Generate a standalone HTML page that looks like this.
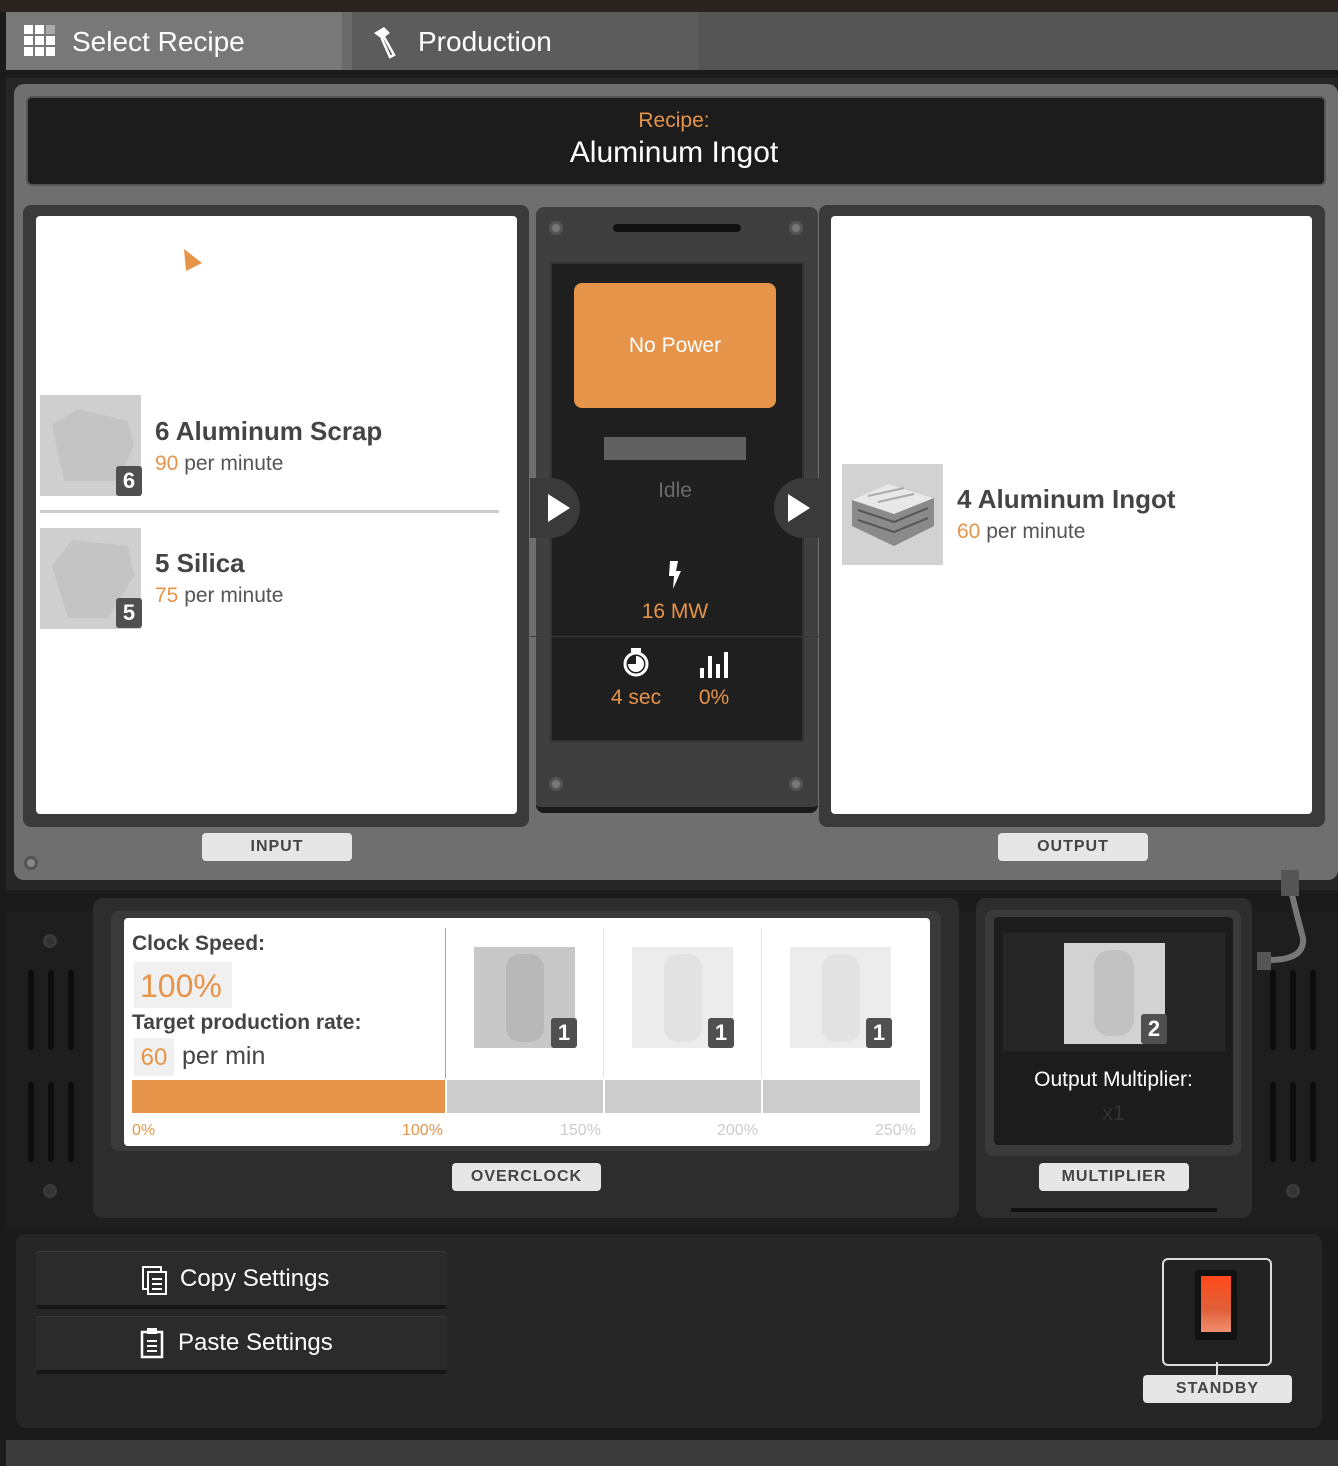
<!DOCTYPE html>
<html><head><style>
*{margin:0;padding:0;box-sizing:border-box}
body{width:1338px;height:1466px;background:#1b1b1b;position:relative;overflow:hidden;font-family:"Liberation Sans","DejaVu Sans",sans-serif}
.a{position:absolute}
.lbl{position:absolute;background:#e6e6e6;color:#444;font-weight:bold;font-size:16px;text-align:center;line-height:28px;border-radius:4px;letter-spacing:1px}
.badge{position:absolute;background:#505050;color:#fff;font-weight:bold;font-size:22px;width:26px;height:30px;line-height:30px;text-align:center;border-radius:3px}
.or{color:#e6944a}
.vent{position:absolute;width:6px;height:80px;background:#0d0d0d;border-radius:3px}
.screw{position:absolute;width:14px;height:14px;border-radius:50%;background:#777;border:3px solid #555}
</style></head><body>
<div class="a" style="left:0;top:0;width:1338px;height:12px;background:#2a2320"></div>
<div class="a" style="left:6px;top:12px;width:1332px;height:58px;background:#555"></div>
<div class="a" style="left:6px;top:12px;width:336px;height:58px;background:#787878"></div>
<div class="a" style="left:342px;top:12px;width:10px;height:58px;background:#6a6a6a"></div>
<div class="a" style="left:352px;top:12px;width:346px;height:58px;background:#5c5c5c"></div>
<svg class="a" style="left:24px;top:25px" width="32" height="32"><g fill="#fff"><rect x="0" y="0" width="9" height="9"/><rect x="11" y="0" width="9" height="9"/><rect x="22" y="0" width="9" height="9" fill="#aaa"/><rect x="0" y="11" width="9" height="9"/><rect x="11" y="11" width="9" height="9"/><rect x="22" y="11" width="9" height="9"/><rect x="0" y="22" width="9" height="9"/><rect x="11" y="22" width="9" height="9"/><rect x="22" y="22" width="9" height="9"/></g></svg>
<div class="a" style="left:72px;top:26px;color:#fff;font-size:28px">Select Recipe</div>
<svg class="a" style="left:372px;top:25px" width="30" height="34"><path d="M2 8 L12 2 L18 8 L10 14Z" fill="#fff"/><path d="M12 12 L22 30 L18 32 L10 14Z" fill="none" stroke="#fff" stroke-width="2.5"/></svg>
<div class="a" style="left:418px;top:26px;color:#fff;font-size:28px">Production</div>

<div class="a" style="left:6px;top:78px;width:1332px;height:812px;background:#262626"></div>
<div class="a" style="left:14px;top:84px;width:1324px;height:796px;background:#6f6f6f;border-radius:10px"></div>
<div class="a" style="left:26px;top:96px;width:1300px;height:90px;background:#1c1c1c;border-radius:6px;border:2px solid #555"></div>
<div class="a or" style="left:0;top:109px;width:1348px;text-align:center;font-size:21px">Recipe:</div>
<div class="a" style="left:0;top:136px;width:1348px;text-align:center;font-size:30px;color:#fff">Aluminum Ingot</div>

<div class="a" style="left:23px;top:205px;width:506px;height:622px;background:#3a3a3a;border-radius:8px"></div>
<div class="a" style="left:36px;top:216px;width:481px;height:598px;background:#fff;border-radius:4px"></div>
<svg class="a" style="left:182px;top:247px" width="22" height="26"><path d="M2 2 L20 16 L4 24Z" fill="#e6944a"/></svg>
<div class="a" style="left:40px;top:395px;width:101px;height:101px;background:#cfcfcf"></div>
<svg class="a" style="left:48px;top:405px" width="88" height="80"><path d="M4 20 L30 4 L80 16 L86 40 L70 76 L16 76 Z" fill="#c4c4c4"/></svg>
<div class="badge" style="left:116px;top:466px">6</div>
<div class="a" style="left:155px;top:416px;font-size:26px;font-weight:bold;color:#444">6 Aluminum Scrap</div>
<div class="a" style="left:155px;top:452px;font-size:21px;color:#555"><span class="or">90</span> per minute</div>
<div class="a" style="left:40px;top:510px;width:459px;height:3px;background:#ccc"></div>
<div class="a" style="left:40px;top:528px;width:101px;height:101px;background:#cfcfcf"></div>
<svg class="a" style="left:48px;top:536px" width="88" height="86"><path d="M4 30 L24 4 L80 10 L86 40 L60 82 L20 82 Z" fill="#c4c4c4"/></svg>
<div class="badge" style="left:116px;top:598px">5</div>
<div class="a" style="left:155px;top:548px;font-size:26px;font-weight:bold;color:#444">5 Silica</div>
<div class="a" style="left:155px;top:584px;font-size:21px;color:#555"><span class="or">75</span> per minute</div>
<div class="lbl" style="left:202px;top:833px;width:150px">INPUT</div>

<div class="a" style="left:536px;top:207px;width:282px;height:606px;background:#3f3f3f;border-radius:8px;border-bottom:6px solid #1a1a1a"></div>
<div class="a" style="left:613px;top:224px;width:128px;height:8px;background:#111;border-radius:4px"></div>
<div class="screw" style="left:549px;top:221px"></div><div class="screw" style="left:789px;top:221px"></div>
<div class="screw" style="left:549px;top:777px"></div><div class="screw" style="left:789px;top:777px"></div>
<div class="a" style="left:550px;top:262px;width:254px;height:480px;background:#1f1f1f;border:2px solid #333"></div>
<div class="a" style="left:574px;top:283px;width:202px;height:125px;background:#e6944a;border-radius:8px;color:#fff;font-size:21px;text-align:center;line-height:125px">No Power</div>
<div class="a" style="left:604px;top:437px;width:142px;height:23px;background:#616161"></div>
<div class="a" style="left:530px;top:479px;width:290px;text-align:center;font-size:21px;color:#6a6a6a">Idle</div>
<div class="a" style="left:530px;top:478px;width:50px;height:60px;background:#3a3a3a;border-radius:0 30px 30px 0"></div>
<svg class="a" style="left:546px;top:492px" width="26" height="32"><path d="M2 2 L24 16 L2 30Z" fill="#fff"/></svg>
<div class="a" style="left:774px;top:478px;width:46px;height:60px;background:#3a3a3a;border-radius:30px 0 0 30px"></div>
<svg class="a" style="left:786px;top:492px" width="26" height="32"><path d="M2 2 L24 16 L2 30Z" fill="#fff"/></svg>
<svg class="a" style="left:666px;top:560px" width="18" height="30"><path d="M4 1 L12 1 L10 11 L15 11 L7 29 L8 16 L3 16Z" fill="#fff"/></svg>
<div class="a or" style="left:530px;top:600px;width:290px;text-align:center;font-size:21px">16 MW</div>
<div class="a" style="left:530px;top:636px;width:290px;height:1px;background:#3a3a3a"></div>
<svg class="a" style="left:620px;top:646px" width="32" height="32"><rect x="11" y="2" width="10" height="4" fill="#fff"/><circle cx="16" cy="18" r="11" fill="none" stroke="#fff" stroke-width="3"/><path d="M16 18 L16 10 A8 8 0 1 1 8 18Z" fill="#fff"/></svg>
<svg class="a" style="left:698px;top:650px" width="34" height="28"><g fill="#fff"><rect x="2" y="18" width="4" height="10"/><rect x="10" y="6" width="4" height="22"/><rect x="18" y="14" width="4" height="14"/><rect x="26" y="2" width="4" height="26"/></g></svg>
<div class="a or" style="left:606px;top:686px;width:60px;text-align:center;font-size:21px">4 sec</div>
<div class="a or" style="left:690px;top:686px;width:48px;text-align:center;font-size:21px">0%</div>

<div class="a" style="left:819px;top:205px;width:506px;height:622px;background:#3a3a3a;border-radius:8px"></div>
<div class="a" style="left:831px;top:216px;width:481px;height:598px;background:#fff;border-radius:4px"></div>
<div class="a" style="left:842px;top:464px;width:101px;height:101px;background:#d2d2d2"></div>
<svg class="a" style="left:848px;top:476px" width="90" height="76"><path d="M4 24 L40 8 L86 22 L86 50 L46 70 L4 50Z" fill="#8a8a8a"/><path d="M4 24 L40 8 L86 22 L46 38Z" fill="#e8e8e8"/><path d="M10 34 L46 46 L80 32 M10 44 L46 56 L80 42" stroke="#555" stroke-width="2" fill="none"/><path d="M20 20 L56 12 M30 26 L66 18" stroke="#aaa" stroke-width="2"/></svg>
<div class="a" style="left:957px;top:484px;font-size:26px;font-weight:bold;color:#444">4 Aluminum Ingot</div>
<div class="a" style="left:957px;top:520px;font-size:21px;color:#555"><span class="or">60</span> per minute</div>
<div class="lbl" style="left:998px;top:833px;width:150px">OUTPUT</div>
<div class="screw" style="left:24px;top:856px;background:#888"></div>

<div class="a" style="left:6px;top:912px;width:1332px;height:318px;background:#1e1e1e"></div>
<div class="screw" style="left:43px;top:934px;background:#333;border-color:#3a3a3a"></div>
<div class="screw" style="left:43px;top:1184px;background:#333;border-color:#3a3a3a"></div>
<div class="screw" style="left:1286px;top:1184px;background:#333;border-color:#3a3a3a"></div>
<div class="vent" style="left:28px;top:970px"></div><div class="vent" style="left:48px;top:970px"></div><div class="vent" style="left:68px;top:970px"></div>
<div class="vent" style="left:28px;top:1082px"></div><div class="vent" style="left:48px;top:1082px"></div><div class="vent" style="left:68px;top:1082px"></div>
<div class="vent" style="left:1270px;top:970px"></div><div class="vent" style="left:1290px;top:970px"></div><div class="vent" style="left:1310px;top:970px"></div>
<div class="vent" style="left:1270px;top:1082px"></div><div class="vent" style="left:1290px;top:1082px"></div><div class="vent" style="left:1310px;top:1082px"></div>
<svg class="a" style="left:1255px;top:868px" width="60" height="110"><path d="M34 14 Q40 40 48 70 Q50 92 14 92" fill="none" stroke="#777" stroke-width="6"/><rect x="26" y="2" width="18" height="26" fill="#555"/><rect x="2" y="84" width="14" height="18" fill="#555"/></svg>

<div class="a" style="left:93px;top:898px;width:866px;height:320px;background:#2d2d2d;border-radius:10px"></div>
<div class="a" style="left:111px;top:911px;width:830px;height:240px;background:#3a3a3a;border-radius:8px"></div>
<div class="a" style="left:124px;top:918px;width:806px;height:228px;background:#fff;border-radius:4px"></div>
<div class="a" style="left:132px;top:932px;font-size:21px;font-weight:bold;color:#444">Clock Speed:</div>
<div class="a" style="left:134px;top:962px;width:98px;height:46px;background:#f0f0f0;color:#e6944a;font-size:32px;padding-left:6px;line-height:48px">100%</div>
<div class="a" style="left:132px;top:1011px;font-size:21px;font-weight:bold;color:#444">Target production rate:</div>
<div class="a" style="left:134px;top:1038px;width:40px;height:38px;background:#f0f0f0;color:#e6944a;font-size:24px;text-align:center;line-height:40px">60</div>
<div class="a" style="left:182px;top:1042px;font-size:25px;color:#444">per min</div>
<div class="a" style="left:445px;top:928px;width:1px;height:150px;background:#e6944a"></div>
<div class="a" style="left:603px;top:928px;width:1px;height:150px;background:#e6e6e6"></div>
<div class="a" style="left:761px;top:928px;width:1px;height:150px;background:#e6e6e6"></div>
<div class="a" style="left:474px;top:947px;width:101px;height:101px;background:#c8c8c8"></div>
<div class="a" style="left:632px;top:947px;width:101px;height:101px;background:#ececec"></div>
<div class="a" style="left:790px;top:947px;width:101px;height:101px;background:#ececec"></div>
<div class="a" style="left:506px;top:954px;width:38px;height:88px;background:#b8b8b8;border-radius:14px"></div>
<div class="a" style="left:664px;top:954px;width:38px;height:88px;background:#e2e2e2;border-radius:14px"></div>
<div class="a" style="left:822px;top:954px;width:38px;height:88px;background:#e2e2e2;border-radius:14px"></div>
<div class="badge" style="left:551px;top:1018px">1</div><div class="badge" style="left:708px;top:1018px">1</div><div class="badge" style="left:866px;top:1018px">1</div>
<div class="a" style="left:132px;top:1080px;width:313px;height:33px;background:#e6944a"></div>
<div class="a" style="left:447px;top:1080px;width:156px;height:33px;background:#ccc"></div>
<div class="a" style="left:605px;top:1080px;width:156px;height:33px;background:#ccc"></div>
<div class="a" style="left:763px;top:1080px;width:157px;height:33px;background:#ccc"></div>
<div class="a or" style="left:132px;top:1122px;font-size:16px">0%</div>
<div class="a or" style="left:402px;top:1122px;font-size:16px">100%</div>
<div class="a" style="left:560px;top:1122px;font-size:16px;color:#ccc">150%</div>
<div class="a" style="left:717px;top:1122px;font-size:16px;color:#ccc">200%</div>
<div class="a" style="left:875px;top:1122px;font-size:16px;color:#ccc">250%</div>
<div class="lbl" style="left:452px;top:1163px;width:149px">OVERCLOCK</div>

<div class="a" style="left:976px;top:898px;width:276px;height:320px;background:#2d2d2d;border-radius:10px"></div>
<div class="a" style="left:985px;top:910px;width:256px;height:246px;background:#3a3a3a;border-radius:8px"></div>
<div class="a" style="left:994px;top:917px;width:239px;height:228px;background:#1c1c1c;border-radius:4px"></div>
<div class="a" style="left:1003px;top:933px;width:222px;height:118px;background:#262626"></div>
<div class="a" style="left:1064px;top:943px;width:101px;height:101px;background:#d2d2d2"></div>
<div class="a" style="left:1094px;top:950px;width:40px;height:86px;background:#c2c2c2;border-radius:16px"></div>
<div class="badge" style="left:1141px;top:1014px">2</div>
<div class="a" style="left:994px;top:1068px;width:239px;text-align:center;font-size:21px;color:#fff">Output Multiplier:</div>
<div class="a" style="left:994px;top:1102px;width:239px;text-align:center;font-size:21px;color:#333">x1</div>
<div class="lbl" style="left:1039px;top:1163px;width:150px">MULTIPLIER</div>
<div class="a" style="left:1011px;top:1208px;width:206px;height:4px;background:#111"></div>

<div class="a" style="left:16px;top:1234px;width:1306px;height:194px;background:#262626;border-radius:10px"></div>
<div class="a" style="left:36px;top:1251px;width:411px;height:58px;background:#2b2b2b;border-radius:3px;border-bottom:4px solid #161616;box-shadow:0 1px 0 #3a3a3a inset"></div>
<div class="a" style="left:36px;top:1316px;width:411px;height:58px;background:#2b2b2b;border-radius:3px;border-bottom:4px solid #161616;box-shadow:0 1px 0 #3a3a3a inset"></div>
<svg class="a" style="left:141px;top:1265px" width="28" height="30"><rect x="2" y="2" width="18" height="22" fill="none" stroke="#fff" stroke-width="2"/><rect x="7" y="7" width="18" height="22" fill="#2b2b2b" stroke="#fff" stroke-width="2"/><path d="M11 14h10M11 19h10M11 24h10" stroke="#fff" stroke-width="2"/></svg>
<div class="a" style="left:180px;top:1265px;font-size:24px;color:#fff">Copy Settings</div>
<svg class="a" style="left:139px;top:1327px" width="28" height="32"><rect x="3" y="5" width="20" height="25" fill="none" stroke="#fff" stroke-width="2.5"/><rect x="8" y="1" width="10" height="6" fill="#fff"/><path d="M8 14h10M8 19h10M8 24h10" stroke="#fff" stroke-width="2"/></svg>
<div class="a" style="left:178px;top:1329px;font-size:24px;color:#fff">Paste Settings</div>
<div class="a" style="left:1162px;top:1258px;width:110px;height:108px;border:2px solid #ddd;border-radius:6px;background:#222"></div>
<div class="a" style="left:1195px;top:1270px;width:42px;height:70px;background:#111;border-radius:3px"></div>
<div class="a" style="left:1201px;top:1276px;width:30px;height:56px;background:linear-gradient(#ff4a1a,#e0603a 60%,#f09070);"></div>
<div class="a" style="left:1216px;top:1362px;width:2px;height:14px;background:#ddd"></div>
<div class="lbl" style="left:1143px;top:1375px;width:149px">STANDBY</div>
<div class="a" style="left:6px;top:1440px;width:1332px;height:26px;background:#3b3b3b"></div>
</body></html>
